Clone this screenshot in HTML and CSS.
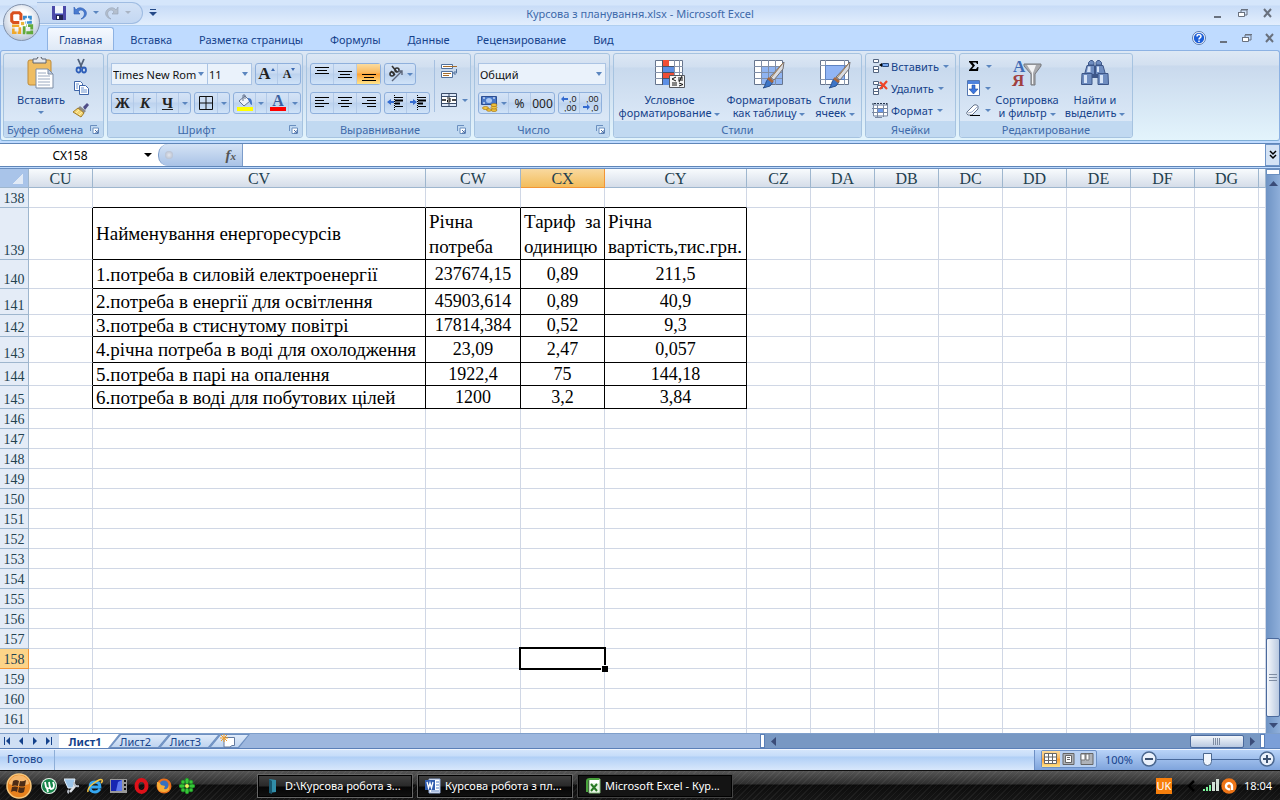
FILE: index.html
```html
<!DOCTYPE html>
<html lang="ru">
<head>
<meta charset="utf-8">
<title>Курсова з планування.xlsx - Microsoft Excel</title>
<link rel="stylesheet" href="styles.css">
</head>
<body>
<div class="app">
  <header class="titlebar">
    <div class="left">
      <div class="quick">
        <button class="flat" aria-label="Сохранить"><svg width="16" height="16" viewBox="0 0 16 16"><path d="M1 1h14v14H2l-1-1z" fill="#4a48a8"/><path d="M4 1h8v7H4z" fill="#eef3fb"/><path d="M4 8h8v1H4z" fill="#8c9ee0"/><path d="M5 10h7v5H5z" fill="#202552"/><path d="M6 11h2v3H6z" fill="#fff"/></svg></button>
        <button class="flat" aria-label="Отменить"><svg width="16" height="16" viewBox="0 0 16 16"><path d="M2 2v7h6L6 7c2-3 5-2 6 0s0 5-3 7c5-1 7-6 4-9S6 2 4 5z" fill="#4a7bd0" stroke="#2b5cb2" stroke-width=".6"/></svg></button>
        <i class="caret"></i>
        <button class="flat" aria-label="Вернуть"><svg width="16" height="16" viewBox="0 0 16 16"><path d="M14 2v7H8l2-2C8 4 5 5 4 7s0 5 3 7C2 13 0 8 3 5s7-3 9 0z" fill="#b4bfce" stroke="#95a2b5" stroke-width=".6"/></svg></button>
        <i class="caret grey"></i>
      </div>
      <button class="flat customize" aria-label="Настройка"><svg width="8" height="7" viewBox="0 0 8 7"><path d="M1 0h6v1H1zM0 3h8L4 7z" fill="#254a88"/></svg></button>
    </div>
    <h1 class="title">Курсова з планування.xlsx - Microsoft Excel</h1>
    <div class="winctl">
      <button class="flat" aria-label="Свернуть"><svg width="10" height="12" viewBox="0 0 10 12"><path d="M1 9h7v2H1z" fill="#69717e"/></svg></button>
      <button class="flat" aria-label="Развернуть"><svg width="10" height="12" viewBox="0 0 10 12"><path d="M3 5V3h6v5H7" fill="none" stroke="#69717e"/><path d="M.5 5.5h6v4h-6z" fill="#fff" stroke="#69717e"/><path d="M0 5h7v1H0zM3 2h7v1H3z" fill="#69717e"/></svg></button>
      <button class="flat" aria-label="Закрыть"><svg width="10" height="12" viewBox="0 0 10 12"><path d="M1 2l7 8M8 2l-7 8" stroke="#69717e" stroke-width="2"/></svg></button>
    </div>
  </header>
  <button class="office" aria-label="Office"><svg width="26" height="26" viewBox="0 0 24 24" fill="none"><path d="M11 9.500V4L9.500 2.500H4L2.500 4v6L4 11.500h5.500" stroke="#d9501e" stroke-width="2.800"/><path d="M14 9V6.500h6v5h-5" stroke="#3a8fd0" stroke-width="2.200" stroke-dasharray="5 1"/><path d="M9.500 14.500H4v6.500h6v-5" stroke="#f0a82a" stroke-width="2.400" stroke-dasharray="7 1"/><path d="M14 15v6h7v-6.500h-5" stroke="#62aa3b" stroke-width="2.600" stroke-dasharray="7 1"/><path d="M11 11h3v3h-3z" fill="#e9b53b"/></svg></button>

  <nav class="tabs">
    <button class="tab active">Главная</button><button class="tab">Вставка</button><button class="tab">Разметка страницы</button><button class="tab">Формулы</button><button class="tab">Данные</button><button class="tab">Рецензирование</button><button class="tab">Вид</button>
    <div class="winctl inner">
      <button class="flat" aria-label="Справка"><svg width="14" height="14" viewBox="0 0 14 14"><circle cx="7" cy="7" r="6.500" fill="#fff" stroke="#5879ae"/><circle cx="7" cy="7" r="5.200" fill="#1d5fd8"/><path d="M5 5.500C5 3 9 3 9 5.300 9 7 7 6.800 7 8.500M7 9.500V11" stroke="#fff" stroke-width="1.500" fill="none"/></svg></button>
      <button class="flat" aria-label="Свернуть книгу"><svg width="10" height="12" viewBox="0 0 10 12"><path d="M1 9h7v2H1z" fill="#69717e"/></svg></button>
      <button class="flat" aria-label="Развернуть книгу"><svg width="10" height="12" viewBox="0 0 10 12"><path d="M3 5V3h6v5H7" fill="none" stroke="#69717e"/><path d="M.5 5.500h6v4h-6z" fill="#fff" stroke="#69717e"/><path d="M0 5h7v1H0zM3 2h7v1H3z" fill="#69717e"/></svg></button>
      <button class="flat" aria-label="Закрыть книгу"><svg width="10" height="12" viewBox="0 0 10 12"><path d="M1 2l7 8M8 2l-7 8" stroke="#69717e" stroke-width="2"/></svg></button>
    </div>
  </nav>

  <section class="ribbon">
    <div class="group g-clip">
      <div class="body">
        <button class="big paste"><svg width="28" height="32" viewBox="0 0 28 32"><rect x="1" y="3" width="23" height="25" rx="2" fill="#efbd62" stroke="#bd8a38"/><path d="M6 2h4a2.500 2.500 0 0 1 5 0h4v4H6z" fill="#e4e7ec" stroke="#5e6570"/><path d="M9 12h12l5 5v14H9z" fill="#fff" stroke="#7d8da5"/><path d="M21 12v5h5z" fill="#c5d1e4" stroke="#7d8da5"/><path d="M11 16h8M11 19h12M11 22h12M11 25h12M11 28h12" stroke="#9aa9c0"/></svg><span>Вставить</span><i class="caret"></i></button>
        <div class="stack small">
          <button class="flat" aria-label="Вырезать"><svg width="16" height="16" viewBox="0 0 16 16" fill="none"><path d="M5 1l4 9M11 1L7 10" stroke="#52627b" stroke-width="1.800"/><ellipse cx="5.500" cy="12" rx="2" ry="2.500" stroke="#2c5db8" stroke-width="1.800"/><ellipse cx="11" cy="12" rx="2" ry="2.500" stroke="#2c5db8" stroke-width="1.800"/></svg></button>
          <button class="flat" aria-label="Копировать"><svg width="16" height="16" viewBox="0 0 16 16"><path d="M1.500 1.500h6l2 2v7h-8z" fill="#fff" stroke="#3e65a8"/><path d="M6.500 5.500h6l3 3v6h-9z" fill="#fff" stroke="#3e65a8"/><path d="M3 4h3M3 6h2M3 8h2M8 8h3M8 10h6M8 12h6" stroke="#6d94d0"/></svg></button>
          <button class="flat" aria-label="Формат по образцу"><svg width="16" height="16" viewBox="0 0 16 16"><path d="M10 5l4-4 2 2-4 5z" fill="#504e88"/><path d="M7 4l6 5-2 2-6-5z" fill="#8e8b86"/><path d="M5 6l6 5-3 4-8-5z" fill="#f2d475" stroke="#a17b26"/><path d="M3 11l3-3M6 13l3-3" stroke="#fff0a8"/></svg></button>
        </div>
      </div>
      <footer><span>Буфер обмена</span><button class="launch" aria-label="Буфер обмена: параметры"><svg width="9" height="9" viewBox="0 0 9 9"><path d="M.5 6V.5H7" fill="none" stroke="#6a8fbf"/><path d="M3 3h5.500v5.500H3z" fill="#fff" stroke="#6a8fbf"/><path d="M5 5l3 3V5M8 8H5" fill="none" stroke="#4a6fa5"/></svg></button></footer>
    </div>

    <div class="group g-font">
      <div class="body rows">
        <div class="row">
          <div class="join"><label class="combo c-font"><select aria-label="Шрифт"><option>Times New Rom</option></select></label><label class="combo c-size"><select aria-label="Размер"><option>11</option></select></label></div>
          <div class="btns"><button class="serif big-a w22">A<i class="mini up"></i></button><button class="serif sm w22">A<i class="mini"></i></button></div>
        </div>
        <div class="row">
          <div class="btns"><button class="serif w22">Ж</button><button class="serif it w24">К</button><button class="serif un w22">Ч</button><button class="drop" aria-label="Подчеркивание"><i class="caret"></i></button></div>
          <div class="btns"><button class="w24" aria-label="Границы"><svg width="14" height="14" viewBox="0 0 14 14"><path d="M.5.5h13v13H.5zM7 0v14M0 7h14" fill="none" stroke="#111" stroke-width="1"/></svg></button><button class="drop" aria-label="Виды границ"><i class="caret"></i></button></div>
          <div class="btns"><button class="w22" aria-label="Цвет заливки"><svg width="18" height="18" viewBox="0 0 18 18"><path d="M3 7l6-5 5 5-6 5z" fill="#eef2fa" stroke="#66758f"/><path d="M7 7V1h2v4" fill="none" stroke="#66758f"/><path d="M12 4c4 0 4 3 4 7-2 0-2-4-4-5z" fill="#4375c4"/><path d="M1 13h16v4H1z" fill="#ff0"/></svg></button><button class="drop" aria-label="Выбор заливки"><i class="caret"></i></button><button class="w22" aria-label="Цвет текста"><svg width="18" height="18" viewBox="0 0 18 18"><text x="9" y="12" text-anchor="middle" font-family="Liberation Serif" font-weight="bold" font-size="16" fill="#3b5f9f">A</text><path d="M1 13h16v4H1z" fill="red"/></svg></button><button class="drop" aria-label="Выбор цвета текста"><i class="caret"></i></button></div>
        </div>
      </div>
      <footer><span>Шрифт</span><button class="launch" aria-label="Шрифт: параметры"><svg width="9" height="9" viewBox="0 0 9 9"><path d="M.5 6V.5H7" fill="none" stroke="#6a8fbf"/><path d="M3 3h5.500v5.500H3z" fill="#fff" stroke="#6a8fbf"/><path d="M5 5l3 3V5M8 8H5" fill="none" stroke="#4a6fa5"/></svg></button></footer>
    </div>

    <div class="group g-align">
      <div class="body">
        <div class="rows">
          <div class="row">
            <div class="btns"><button class="w23" aria-label="По верхнему краю"><svg width="16" height="16" viewBox="0 0 16 16"><path d="M1 1.500h14M3 4.500h10M1 7.500h14" stroke="#000" stroke-width="1"/></svg></button><button class="w23" aria-label="По середине"><svg width="16" height="16" viewBox="0 0 16 16"><path d="M1 5.500h14M3 8.500h10M1 11.500h14" stroke="#000"/></svg></button><button class="w23 hot" aria-label="По нижнему краю"><svg width="16" height="16" viewBox="0 0 16 16"><path d="M1 8.500h14M3 11.500h10M1 14.500h14" stroke="#000"/></svg></button></div>
            <div class="btns"><button class="w30" aria-label="Ориентация"><svg width="17" height="18" viewBox="0 0 17 18"><g fill="none" stroke="#333" stroke-width="1.600"><circle cx="5" cy="9" r="2"/><path d="M4 6l4 4"/><circle cx="10" cy="5" r="2"/><path d="M5 1l5 6"/></g><path d="M5 16L15 6m-4 0h4v4" fill="none" stroke="#5a6478" stroke-width="1.400"/></svg><i class="caret"></i></button></div>
          </div>
          <div class="row">
            <div class="btns"><button class="w23" aria-label="По левому краю"><svg width="16" height="16" viewBox="0 0 16 16"><path d="M1 2.500h14M1 5.500h9M1 8.500h14M1 11.500h9" stroke="#000"/></svg></button><button class="w23" aria-label="По центру"><svg width="16" height="16" viewBox="0 0 16 16"><path d="M1 2.500h14M4 5.500h8M1 8.500h14M4 11.500h8" stroke="#000"/></svg></button><button class="w23" aria-label="По правому краю"><svg width="16" height="16" viewBox="0 0 16 16"><path d="M1 2.500h14M6 5.500h9M1 8.500h14M6 11.500h9" stroke="#000"/></svg></button></div>
            <div class="btns"><button class="w22" aria-label="Уменьшить отступ"><svg width="17" height="16" viewBox="0 0 17 16"><path d="M8 2.500h8M8 11.500h8" stroke="#000"/><path d="M8 5.500h8M8 8.500h5" stroke="#000" stroke-width="2"/><path d="M7.500 0v16" stroke="#000" stroke-dasharray="1 1"/><path d="M0 7l4-3v2h3v2H4v2z" fill="#346bd0"/></svg></button><button class="w22" aria-label="Увеличить отступ"><svg width="17" height="16" viewBox="0 0 17 16"><path d="M8 2.500h8M8 11.500h8" stroke="#000"/><path d="M8 5.500h8M8 8.500h5" stroke="#000" stroke-width="2"/><path d="M7.500 0v16" stroke="#000" stroke-dasharray="1 1"/><path d="M7 7L3 4v2H0v2h3v2z" fill="#346bd0"/></svg></button></div>
          </div>
        </div>
        <div class="rows wrapcol">
          <button class="flat" aria-label="Перенос текста"><svg width="17" height="16" viewBox="0 0 17 16"><path d="M.5 1.500h11v4H.5zM.5 8.500h11v6H.5z" fill="#fff" stroke="#51719d"/><path d="M2 3.500h14" stroke="#a36b2b"/><path d="M2 10.500h8M2 12.500h6" stroke="#a36b2b"/><path d="M15.500 6v4h-3m2-2l-2 2 2 2" fill="none" stroke="#51719d"/></svg></button>
          <button class="flat pair" aria-label="Объединить"><svg width="17" height="16" viewBox="0 0 17 16"><path d="M.5 1.500h15v13H.5zM8 1.500v13M0 4.500h16M0 11.500h16" fill="#dce7f7" stroke="#394b68"/><path d="M1 5h14v6H1z" fill="#fff"/><path d="M1 8h4M11 8h4" stroke="#111" stroke-width="1.500"/><path d="M6 6h3v4H6.500V8H9" fill="none" stroke="#111"/></svg><i class="caret"></i></button>
        </div>
      </div>
      <footer><span>Выравнивание</span><button class="launch" aria-label="Выравнивание: параметры"><svg width="9" height="9" viewBox="0 0 9 9"><path d="M.5 6V.5H7" fill="none" stroke="#6a8fbf"/><path d="M3 3h5.500v5.500H3z" fill="#fff" stroke="#6a8fbf"/><path d="M5 5l3 3V5M8 8H5" fill="none" stroke="#4a6fa5"/></svg></button></footer>
    </div>

    <div class="group g-num">
      <div class="body rows">
        <div class="row"><label class="combo c-fmt"><select aria-label="Числовой формат"><option>Общий</option></select></label></div>
        <div class="row">
          <div class="btns"><button class="w20" aria-label="Финансовый формат"><svg width="17" height="17" viewBox="0 0 17 17"><path d="M.5 1.500h15v8H.5z" fill="#4777c7" stroke="#2c4e93"/><ellipse cx="8" cy="5.500" rx="3" ry="2.500" fill="#a8c6f2"/><path d="M2 3h2M12 3h2M2 8h2" stroke="#fff"/><g fill="#f4c63b" stroke="#a4741a" stroke-width=".7"><ellipse cx="13" cy="15" rx="3" ry="1.500"/><ellipse cx="13" cy="12.500" rx="3" ry="1.500"/><ellipse cx="13" cy="10" rx="3" ry="1.500"/><ellipse cx="4.500" cy="13" rx="3" ry="1.500"/><ellipse cx="8" cy="15" rx="2.500" ry="1.300"/></g></svg></button><button class="drop w13" aria-label="Валюта"><i class="caret"></i></button><button class="w22 num">%</button><button class="w23 num">000</button></div>
          <div class="btns"><button class="w21" aria-label="Увеличить разрядность"><svg width="18" height="18" viewBox="0 0 18 18"><text x="9" y="8" font-family="Liberation Sans" font-size="9" fill="#222">,0</text><text x="4" y="17" font-family="Liberation Sans" font-size="9" fill="#222">,00</text><path d="M1 5l3-3v2h4v2H4v2z" fill="#346bd0"/></svg></button><button class="w21" aria-label="Уменьшить разрядность"><svg width="18" height="18" viewBox="0 0 18 18"><text x="4" y="8" font-family="Liberation Sans" font-size="9" fill="#222">,00</text><text x="9" y="17" font-family="Liberation Sans" font-size="9" fill="#222">,0</text><path d="M8 13l-3-3v2H1v2h4v2z" fill="#346bd0"/></svg></button></div>
        </div>
      </div>
      <footer><span>Число</span><button class="launch" aria-label="Число: параметры"><svg width="9" height="9" viewBox="0 0 9 9"><path d="M.5 6V.5H7" fill="none" stroke="#6a8fbf"/><path d="M3 3h5.500v5.500H3z" fill="#fff" stroke="#6a8fbf"/><path d="M5 5l3 3V5M8 8H5" fill="none" stroke="#4a6fa5"/></svg></button></footer>
    </div>

    <div class="group g-style">
      <div class="body">
        <button class="big b1"><svg width="32" height="32" viewBox="0 0 32 32"><path d="M1.500 3.500h27v24h-27z" fill="#fff" stroke="#66758e"/><path d="M1 9.500h28M1 15.500h28M1 21.500h28M8.500 3v25M20.500 3v25M25.500 3v25" stroke="#8693aa"/><path d="M8 3h7v6H8zM8 15h12v6H8z" fill="#f04e35"/><path d="M8 9h12v6H8zM8 21h7v7H8z" fill="#5c8fe5"/><path d="M8.500 3v25M8 9.500h12M8 15.500h12M8 21.500h8" stroke="#46536b"/><path d="M15.500 18.500h15v12h-15z" fill="#f6f6f6" stroke="#55585e"/><path d="M22 20l-4 2 4 2M18 26h5M18 28h5M24 21h5M24 23h5M28 19l-3 6M25 26l4 1.500-4 1.500" fill="none" stroke="#111"/></svg><span>Условное<br>форматирование <i class="caret"></i></span></button>
        <button class="big b2"><svg width="32" height="32" viewBox="0 0 32 32"><path d="M1.500 3.500h28v24h-28z" fill="#fff" stroke="#66758e"/><path d="M8 9h21v18H8z" fill="#8fb4f2"/><path d="M1 9.500h28M1 15.500h28M1 21.500h28M8.500 3v25M15.500 3v25M22.500 3v25" stroke="#7f8ea8"/><path d="M31 5l-1 7-9 11-4-3z" fill="#d9dce2" stroke="#747070"/><path d="M30 6L18 21" stroke="#9e7b54"/><path d="M16 21l4 4-3 4-7 2c3-2 2-7 6-10z" fill="#3d75c7" stroke="#29508d"/><path d="M16 20l5 4-2 2-5-4z" fill="#a9683c"/></svg><span>Форматировать<br>как таблицу <i class="caret"></i></span></button>
        <button class="big b3"><svg width="32" height="32" viewBox="0 0 32 32"><path d="M1.500 3.500h28v24h-28z" fill="#fff" stroke="#66758e"/><path d="M1 8.500h28M1 22.500h28M6.500 3v25M25.500 3v25" stroke="#8a98ae"/><path d="M6.500 8.500h19v14h-19z" fill="#91b5f5" stroke="#5e83c1"/><path d="M31 5l-1 7-9 11-4-3z" fill="#d9dce2" stroke="#747070"/><path d="M30 6L18 21" stroke="#9e7b54"/><path d="M16 21l4 4-3 4-7 2c3-2 2-7 6-10z" fill="#3d75c7" stroke="#29508d"/><path d="M16 20l5 4-2 2-5-4z" fill="#a9683c"/></svg><span>Стили<br>ячеек <i class="caret"></i></span></button>
      </div>
      <footer><span>Стили</span></footer>
    </div>

    <div class="group g-cells">
      <div class="body stack cells">
        <button class="flat line"><svg width="17" height="16" viewBox="0 0 17 16"><path d="M1.500 1.500h5v3h-5zM1.500 8.500h5v3h-5zM1.500 11.500h5v3h-5z" fill="#fff" stroke="#53647f"/><path d="M10.500 5.500h6v3h-6z" fill="#78a7ed" stroke="#26487b"/><path d="M7 7l3-2v4z"/></svg><span>Вставить</span><i class="caret"></i></button>
        <button class="flat line"><svg width="17" height="16" viewBox="0 0 17 16"><path d="M1.500 1.500h5v3h-5zM1.500 8.500h5v3h-5zM1.500 11.500h5v3h-5zM5.500 5.500h5v3h-5z" fill="#fff" stroke="#53647f"/><path d="M8 2l7 7M15 1L8 9" stroke="#f04427" stroke-width="2.200"/></svg><span>Удалить</span><i class="caret"></i></button>
        <button class="flat line"><svg width="17" height="16" viewBox="0 0 17 16"><path d="M1.500 3.500h14v10h-14z" fill="#fff"/><path d="M6 7h5v4H6z" fill="#6b9aee"/><path d="M0 6.500h16M0 10.500h16M5.500 3v13M11.500 3v12M1.500 3v11h14V3zM3 15.500h7" fill="none" stroke="#7a89a2"/><path d="M1 1v3M15 1v3M2 1.500h13" stroke="#25344b" stroke-dasharray="2 1"/></svg><span>Формат</span><i class="caret"></i></button>
      </div>
      <footer><span>Ячейки</span></footer>
    </div>

    <div class="group g-edit">
      <div class="body">
        <div class="stack cells">
          <button class="flat line" aria-label="Сумма"><svg width="16" height="16" viewBox="0 0 16 16"><path d="M3 3h9v3h-1L10 4.500H6.500L9 7.500 6 11h4l1.500-2h1L12 13H3v-1l3.500-4L3 4z" fill="#000"/></svg><i class="caret"></i></button>
          <button class="flat line" aria-label="Заполнить"><svg width="15" height="16" viewBox="0 0 15 16"><path d="M1.500.5h12v15h-12z" fill="#fff" stroke="#5577b0"/><path d="M2 1h11v3H2z" fill="#4f83dd"/><path d="M6 5h3v4h3l-4.500 5L3 9h3z" fill="#3b76df" stroke="#214c9a" stroke-width=".6"/></svg><i class="caret"></i></button>
          <button class="flat line" aria-label="Очистить"><svg width="15" height="16" viewBox="0 0 15 16"><path d="M1 10l7-7q2-1 4 1v3l-6 6H2q-2-1-1-3z" fill="#fff" stroke="#65748c"/><path d="M2 11l4-1 6-6" fill="none" stroke="#9aabcb"/><path d="M4 13.500h10" stroke="#000"/></svg><i class="caret"></i></button>
        </div>
        <button class="big b4"><svg width="32" height="32" viewBox="0 0 32 32"><text x="2" y="15" font-family="Liberation Serif" font-weight="bold" font-size="17" fill="#3f6bb5">А</text><text x="1" y="29" font-family="Liberation Serif" font-weight="bold" font-size="17" fill="#a04040">Я</text><path d="M13 7h17v2l-6 8v11h-4V17l-7-8z" fill="#a9aaae" stroke="#77787d"/><path d="M16 8h9l-3 8v11h-1V16z" fill="#f1f2f4"/></svg><span>Сортировка<br>и фильтр <i class="caret"></i></span></button>
        <button class="big b5"><svg width="32" height="32" viewBox="0 0 32 32"><g fill="#6f8dc0" stroke="#3d5688"><path d="M9.500 5.500l2-2h2l1.500 2V8H9.500zM17 5.500l1.500-2h2l2 2V8H17z"/><path d="M8 8.500h7.500v9H5.500zM16.500 8.500H24l2.500 9h-10z"/><path d="M3 16.500h10v11H2.500zM19 16.500h10l.5 11H19z"/></g><path d="M5 18h3v8H5zM21 18h3v8h-3zM9 9.500h2.500V15H8zM18 9.500h2V15h-2z" fill="#d5e3f8"/><path d="M13 17h6v4h-6z" fill="#3d5688"/></svg><span>Найти и<br>выделить <i class="caret"></i></span></button>
      </div>
      <footer><span>Редактирование</span></footer>
    </div>
  </section>

  <section class="formula">
    <div class="namebox"><input aria-label="Имя" value="CX158"><i class="caret black"></i></div>
    <button class="fx" aria-label="Вставить функцию"><i class="dot"></i><span>f<sub>x</sub></span></button>
    <input class="finput" aria-label="Строка формул">
    <button class="expand" aria-label="Развернуть строку"><svg width="8" height="10" viewBox="0 0 8 10"><path d="M1 1l3 3 3-3M1 5l3 3 3-3" fill="none" stroke="#000" stroke-width="1.500"/></svg></button>
  </section>

  <main class="sheetarea">
    <div class="sheet"><table id="grid"></table></div>
    <div class="vscroll">
      <i class="split"></i>
      <button class="arr" aria-label="Вверх"><svg width="9" height="5" viewBox="0 0 9 5"><path d="M0 5h9L4.500 0z" fill="#3a4c78"/></svg></button>
      <div class="vtrack"><i class="thumb"></i></div>
      <button class="arr" aria-label="Вниз"><svg width="9" height="5" viewBox="0 0 9 5"><path d="M0 0h9L4.500 5z" fill="#3a4c78"/></svg></button>
    </div>
  </main>

  <div class="bottom">
    <div class="navs">
      <button class="flat" aria-label="Первый лист"><svg width="7" height="8" viewBox="0 0 7 8"><path d="M0 0h1v8H0zM6 0v8L2 4z" fill="#15428b"/></svg></button>
      <button class="flat" aria-label="Предыдущий"><svg width="7" height="8" viewBox="0 0 7 8"><path d="M5 0v8L1 4z" fill="#15428b"/></svg></button>
      <button class="flat" aria-label="Следующий"><svg width="7" height="8" viewBox="0 0 7 8"><path d="M1 0v8l4-4z" fill="#15428b"/></svg></button>
      <button class="flat" aria-label="Последний"><svg width="7" height="8" viewBox="0 0 7 8"><path d="M0 0v8l4-4zM5 0h1v8H5z" fill="#15428b"/></svg></button>
    </div>
    <button class="stab on"><span>Лист1</span></button><button class="stab"><span>Лист2</span></button><button class="stab"><span>Лист3</span></button><button class="stab new" aria-label="Вставить лист"><svg width="16" height="14" viewBox="0 0 16 14"><path d="M4 3.500h10.500v8H12l-2 1.500H4z" fill="#fff" stroke="#62799f"/><path d="M4 0v8M0 4h8M1 1l6 6M7 1L1 7" stroke="#f29d26"/></svg></button>
    <div class="gap"></div>
    <i class="hsplit"></i>
    <div class="hscroll">
      <button class="flat" aria-label="Влево"><svg width="5" height="9" viewBox="0 0 5 9"><path d="M5 0v9L0 4.500z" fill="#3a4c78"/></svg></button>
      <i class="hthumb"></i>
      <button class="flat" aria-label="Вправо"><svg width="5" height="9" viewBox="0 0 5 9"><path d="M0 0v9l5-4.500z" fill="#3a4c78"/></svg></button>
    </div>
    <i class="hsplit"></i><i class="corner"></i>
  </div>

  <footer class="status">
    <span class="ready">Готово</span>
    <div class="zoombar">
      <div class="views">
        <button class="hot" aria-label="Обычный"><svg width="14" height="12" viewBox="0 0 14 12"><path d="M.5.5h12v10H.5zM0 4h13M0 7.500h13M4.500 0v11M8.500 0v11" fill="#fff" stroke="#666"/></svg></button>
        <button aria-label="Разметка страницы"><svg width="14" height="12" viewBox="0 0 14 12"><path d="M1 .5h11v11H1z" fill="#aeb2b8" stroke="#666"/><path d="M3.500 2.500h6v7h-6z" fill="#fff" stroke="#666"/><path d="M5 4.500h3M5 6.500h3" stroke="#666"/></svg></button>
        <button aria-label="Страничный"><svg width="14" height="12" viewBox="0 0 14 12"><path d="M1 .5h12v11H1z" fill="#aeb2b8" stroke="#666"/><path d="M1 1h4v6H1zM6 1h3v6H6z" fill="#fff" stroke="#777"/></svg></button>
      </div>
      <span class="pct">100%</span>
      <button class="flat" aria-label="Уменьшить"><svg width="16" height="16" viewBox="0 0 16 16"><circle cx="8" cy="8" r="7" fill="#eaf1fb" stroke="#4a678f" stroke-width="1.500"/><path d="M4 8h8" stroke="#3c5170" stroke-width="2"/></svg></button>
      <input class="zoom" type="range" min="0" max="100" value="49" aria-label="Масштаб">
      <button class="flat" aria-label="Увеличить"><svg width="16" height="16" viewBox="0 0 16 16"><circle cx="8" cy="8" r="7" fill="#eaf1fb" stroke="#4a678f" stroke-width="1.500"/><path d="M4 8h8M8 4v8" stroke="#3c5170" stroke-width="2"/></svg></button>
    </div>
  </footer>

  <footer class="taskbar">
    <div class="launchers">
      <button class="flat start" aria-label="Пуск"><svg width="26" height="26" viewBox="0 0 26 26"><circle cx="13" cy="13" r="12" fill="#e8821e" stroke="#f8c77c" stroke-width="1.500"/><path d="M3 11a10 9 0 0 1 20 0q-10 4-20 0z" fill="#f6b66a"/><path d="M7 8q3-2 6 0l-1 5q-3-1-6 0zM14 8q3 1 6-1l-1 6q-3 1-6 0zM6 14q3-1 6 0l-1 5q-3-2-6 0zM13 14q3 1 6 0l-1 5q-3 2-6 0z" fill="#4b2b16"/></svg></button>
      <button class="flat" aria-label="uTorrent"><svg width="16" height="16" viewBox="0 0 16 16"><circle cx="8" cy="8" r="8" fill="#e6f4ec"/><circle cx="8" cy="8" r="7" fill="#18864b"/><path d="M4 4l1 5q1 2 4 1l-1-6M9 9l1 2q3 0 3-4l-1-3M6 10l1 4" fill="none" stroke="#fff" stroke-width="1.800"/></svg></button>
      <button class="flat" aria-label="Настройка"><svg width="16" height="16" viewBox="0 0 16 16"><path d="M0 1h11l-2 9H4z" fill="#9cc4e8" stroke="#e4f0fa"/><path d="M6 14l6-7" stroke="#dfe3e8" stroke-width="2.500"/><path d="M10 4q0 5 5 4M5 12q-2 2 0 3" stroke="#b7bdc6" stroke-width="2" fill="none"/></svg></button>
      <button class="flat" aria-label="Internet Explorer"><svg width="16" height="16" viewBox="0 0 16 16"><path d="M13 11q-2 3-5 3-5 0-5-5t5-5q5 0 5 5H4" fill="none" stroke="#35a7f1" stroke-width="2.800"/><path d="M1 14Q0 10 7 5t8-3q1 1-1 3" fill="none" stroke="#f3c542" stroke-width="1.500"/></svg></button>
      <button class="flat" aria-label="Видео"><svg width="17" height="14" viewBox="0 0 17 14"><path d="M0 0h17v14H0z" fill="#999"/><path d="M1 1h11v11H1z" fill="#1726b2"/><path d="M6 12l2-9 4-2v11z" fill="#5d78ee"/><path d="M14 1h2v2h-2zM14 5h2v2h-2zM14 9h2v2h-2z" fill="#111"/></svg></button>
      <button class="flat" aria-label="Opera"><svg width="15" height="16" viewBox="0 0 15 16"><ellipse cx="7.500" cy="8" rx="5" ry="6" fill="none" stroke="#dd1119" stroke-width="4"/></svg></button>
      <button class="flat" aria-label="Firefox"><svg width="16" height="16" viewBox="0 0 16 16"><circle cx="8" cy="8" r="7.500" fill="#e86e1b"/><circle cx="8" cy="7" r="4.500" fill="#3770c0"/><path d="M1 4q3 0 4 3l4 1-1 3q5 1 5-5 2 7-4 8Q0 15 1 4z" fill="#f8ad37"/></svg></button>
      <button class="flat" aria-label="ICQ"><svg width="16" height="16" viewBox="0 0 16 16"><g fill="#37c637" stroke="#147a20" stroke-width=".6"><ellipse cx="8" cy="3" rx="2" ry="3"/><ellipse cx="8" cy="13" rx="2" ry="3"/><ellipse cx="3" cy="8" rx="3" ry="2"/><ellipse cx="13" cy="8" rx="3" ry="2"/><circle cx="4" cy="4" r="2"/><circle cx="12" cy="4" r="2"/><circle cx="4" cy="12" r="2"/><circle cx="12" cy="12" r="2"/></g><circle cx="8" cy="8" r="2" fill="#e9f45d"/></svg></button>
    </div>
    <div class="tasks">
      <button class="task"><svg width="16" height="16" viewBox="0 0 16 16"><path d="M4 1l7 1v12l-7 1z" fill="#318da8"/><path d="M4 1l3 2v13l-3-1z" fill="#18566d"/></svg><span>D:\Курсова робота з...</span></button>
      <button class="task"><svg width="16" height="16" viewBox="0 0 16 16"><path d="M4 1h11v14H4z" fill="#fff" stroke="#8fa9d7"/><path d="M11 4h3M11 7h3M11 10h3M6 13h8" stroke="#537dc3"/><path d="M0 2h10v10H0z" fill="#315cae"/><path d="M2 4l1.500 6L5 5l1.500 5L8 4" fill="none" stroke="#fff" stroke-width="1.300"/></svg><span>Курсова робота з пл...</span></button>
      <button class="task now"><svg width="16" height="16" viewBox="0 0 16 16"><path d="M4 1h11v14H4z" fill="#fff" stroke="#79b46f"/><path d="M2 14V3q0-2 3-2h9" fill="none" stroke="#48a23b" stroke-width="2"/><path d="M5 5h9v9H5z" fill="#e8f5e4"/><path d="M6 6l6 7M12 6l-6 7" stroke="#287924" stroke-width="2"/></svg><span>Microsoft Excel - Кур...</span></button>
    </div>
    <div class="tray">
      <span class="lang">UK</span>
      <svg class="back" width="8" height="12" viewBox="0 0 8 12"><path d="M7 1L2 6l5 5" fill="none" stroke="#000" stroke-width="2.500"/></svg>
      <svg width="16" height="13" viewBox="0 0 16 13"><path d="M0 10h2v2H0zM3 8h2v4H3zM6 6h2v6H6z" fill="#7cf29a"/><path d="M9 3h3v9H9zM13 0h3v12h-3z" fill="#d4ded6"/></svg>
      <svg width="16" height="16" viewBox="0 0 16 16"><circle cx="8" cy="8" r="7.700" fill="#ef7517"/><path d="M11 12V8a3 3 0 1 0-2 3" fill="none" stroke="#fff" stroke-width="2.400"/></svg>
      <time>18:04</time>
    </div>
  </footer>
</div>
<script src="grid.js"></script>
</body>
</html>
```
FILE: styles.css
```css
* { box-sizing: border-box; }
body { margin: 0; font: 11px/13px "Noto Sans", "DejaVu Sans", sans-serif; color: #15428b; }
button, input, select { font: inherit; color: inherit; margin: 0; padding: 0; border: 0; background: none; }
button { display: flex; align-items: center; justify-content: center; }
svg { display: block; flex: none; }
.app { position: relative; display: flex; flex-direction: column; height: 100vh; overflow: hidden; background: #bfdbff; }

.titlebar { flex: none; height: 26px; display: grid; grid-template-columns: 1fr auto 1fr; align-items: center; border-bottom: 1px solid #b0cff0; background: linear-gradient(#d5e6fb 0, #d5e6fb 5px, #c8dcf7 6px, #e2eefd 25px); }
.left { display: flex; align-items: center; }
.quick { display: flex; align-items: center; gap: 5px; height: 22px; width: 106px; margin-left: 37px; padding-left: 14px; border: 1px solid #9fbce2; border-left: 0; border-radius: 0 11px 11px 0; background: linear-gradient(#d3e2f6, #c3d7f2); }
.customize { margin-left: 2px; padding: 4px; }
.title { margin: 0; padding-top: 2px; font: inherit; color: #3e6aaa; }
.winctl { display: flex; gap: 15px; align-items: center; justify-content: flex-end; padding-right: 7px; }
.winctl.inner { margin-left: auto; gap: 13px; padding: 0 5px 5px 0; }
.caret { display: inline-block; flex: none; border: 3px solid transparent; border-top: 3px solid #5b86bf; border-bottom: 0; vertical-align: middle; }
.caret.grey { border-top-color: #a9b4c4; }
.caret.black { border-width: 4px 4px 0; border-top-color: #000; }
.office { position: absolute; left: 3px; top: 4px; width: 37px; height: 37px; border-radius: 50%; border: 1px solid #8292ab; background: radial-gradient(circle at 50% 40%, #fff 30%, #d4dce8 60%, #9eadc4 100%); }

.tabs { flex: none; height: 24px; display: flex; align-items: flex-end; padding-left: 47px; background: #bfdbff; }
.tab { height: 23px; padding: 0 12px 0 13px; border: 1px solid transparent; border-bottom: 0; }
.tab.active { padding: 0 11px; margin-right: 2px; border-color: #8db2e3; border-radius: 3px 3px 0 0; background: linear-gradient(#f5f9ff, #dfe9f6); }

.ribbon { flex: none; height: 91px; display: flex; gap: 3px; padding: 2px 3px; border: 1px solid #8db2e3; border-bottom-color: #7faed6; border-radius: 3px; background: linear-gradient(#dde8f5 0, #d3e0f0 14px, #c9d9ed 15px, #e3f4fc 100%); }
.group { flex: none; display: flex; flex-direction: column; height: 85px; border: 1px solid #a6c3e0; border-radius: 3px; background: linear-gradient(#dce7f4 0, #d1dff0 13px, #c8d9ed 14px, #dbe8f7 68px); }
.group footer { flex: none; display: flex; align-items: center; height: 16px; background: #c1d9f1; color: #3e6aaa; border-radius: 0 0 3px 3px; }
.group footer span { flex: 1; text-align: center; white-space: nowrap; }
.launch { width: 17px; }
.body { flex: 1; display: flex; min-height: 0; }
.g-clip { width: 101px; margin-left: -1px; } .g-font { width: 196px; } .g-align { width: 165px; } .g-num { width: 136px; } .g-style { width: 249px; } .g-cells { width: 91px; } .g-edit { width: 174px; }
.stack { display: flex; flex-direction: column; }
.small { padding-top: 4px; gap: 6px; }
.rows { display: flex; flex-direction: column; gap: 7px; padding: 9px 0 0 3px; }
.row { display: flex; gap: 3px; }
.join, .btns { display: flex; height: 22px; }
.btns { border: 1px solid #8fb0dc; border-radius: 3px; background: linear-gradient(#d4e3f6 0, #c9dbf2 45%, #bcd2ee 50%, #d0e3f8 100%); }
.btns button { flex: none; border-right: 1px solid #b3cae8; height: 20px; }
.btns button:last-child { border-right: 0; }
.btns .w20 { border-right: 0; }
.w13 { width: 13px; } .w20 { width: 20px; } .w21 { width: 21px; } .w22 { width: 22px; } .w23 { width: 23px; } .w24 { width: 23px; } .w30 { width: 30px; gap: 3px; }
.btns .drop { width: 10px; }
.g-font .drop { width: 11px; }
.hot { background: linear-gradient(#fbdb9d 0, #fbb85c 45%, #fd9f32 50%, #ffe58c 100%); }
.serif { font: bold 15px/18px "Liberation Serif", serif; color: #222; }
.it { font-style: italic; }
.un { text-decoration: underline; }
.big-a { font-size: 17px; }
.sm { font-size: 12px; }
.mini { align-self: flex-start; margin-top: 4px; border: 2px solid transparent; border-top: 3px solid #3d6ab0; border-bottom: 0; }
.mini.up { border-top: 0; border-bottom: 3px solid #3d6ab0; }
.num { font-size: 12px; color: #222; font-family: "Liberation Sans Narrow", "Noto Sans", sans-serif; }
.combo { position: relative; display: block; height: 22px; border: 1px solid #abc4e4; background: #eaf2fb; color: #111; }
.combo::after { content: ""; position: absolute; right: 3px; top: 8px; border: 3px solid transparent; border-top: 4px solid #5b86bf; border-bottom: 0; }
.combo select { appearance: none; width: 100%; height: 20px; padding-left: 1px; outline: 0; color: #111; }
.c-font { width: 97px; } .c-size { width: 44px; border-left: 0; } .c-fmt { width: 128px; }
.wrapcol { margin: 6px 0 9px 4px; padding: 3px 0 0 6px; border-left: 1px solid #a6c0e0; gap: 13px; align-items: flex-start; }
.pair { gap: 4px; }
.big { flex-direction: column; justify-content: flex-start; padding-top: 3px; gap: 4px; white-space: nowrap; text-align: center; }
.paste { width: 60px; margin: 0 2px 0 7px; }
.big .caret { margin-top: 1px; }
.b1 { width: 111px; } .b2 { width: 88px; } .b3 { width: 44px; } .b4 { width: 70px; } .b5 { width: 66px; }
.cells { padding: 3px 0 0 6px; gap: 4px; }
.line { gap: 2px; height: 18px; justify-content: flex-start; }
.line .caret { margin-left: 2px; }

.formula { flex: none; display: flex; height: 24px; margin-top: 2px; border: solid #5f86b8; border-width: 1px 0; background: #fff; color: #000; }
.namebox { display: flex; align-items: center; width: 158px; padding-right: 6px; }
.namebox input { flex: 1; min-width: 0; padding-right: 4px; text-align: center; font-size: 12px; }
.fx { width: 85px; justify-content: space-between; padding: 0 6px; border: 1px solid #7b9cca; border-width: 0 1px; border-radius: 10px 0 0 10px; background: linear-gradient(#d5e3f5, #a9c2e6); }
.fx span { font: italic bold 15px/18px "Liberation Serif", serif; color: #555; }
.fx sub { font-size: 11px; vertical-align: baseline; }
.dot { width: 8px; height: 8px; border-radius: 50%; background: radial-gradient(#e4e6ec, #a9b4c8); }
.finput { flex: 1; min-width: 0; }
.expand { width: 15px; border: 1px solid #6f95c8; background: #d4e3f5; }

.sheetarea { flex: 1; min-height: 0; display: flex; border-top: 1px solid #6a8fc0; margin-top: 1px; }
.sheet { flex: 1; min-width: 0; overflow: hidden; background: #fff; }
#grid { table-layout: fixed; width: 100%; border-collapse: separate; border-spacing: 0; font: 19px/19px "Liberation Serif", serif; color: #000; }
#grid td, #grid th { padding: 0; border: solid #d0d7e5; border-width: 0 1px 1px 0; font-weight: normal; }
#grid thead th { height: 19px; font-size: 16px; line-height: 17px; color: #23414f; border-color: #9eb6ce; background: linear-gradient(#f8fbfd, #d5dde9); }
#grid tbody th { font-size: 14px; line-height: 17px; color: #23414f; vertical-align: bottom; border-color: #9eb6ce; background: #e4ecf7; }
#grid .all { background: linear-gradient(135deg, transparent 50%, #e1eaf6 50%) 70% 60% / 10px 10px no-repeat, #a9c4e9; }
#grid thead .sel, #grid tbody .sel { background: linear-gradient(#f9d99f, #f3bd5c); border-color: #f29536; }
#grid tbody .sel { background: #fdd488; }
#grid .r { border-right-color: #000; }
#grid .b { border-bottom-color: #000; }
#grid .t { padding-left: 3px; white-space: nowrap; }
#grid .m { text-align: center; font-size: 18px; }
#grid .h { line-height: 25px; }
#grid .j { padding-right: 3px; text-align: justify; white-space: normal; }
#grid .cur { position: relative; }
.cur::before { content: ""; position: absolute; inset: -2px; border: 2px solid #000; }
.cur::after { content: ""; position: absolute; right: -4px; bottom: -4px; width: 6px; height: 6px; background: #000; border: solid #fff; border-width: 1px 0 0 1px; }

.vscroll { flex: none; width: 14px; display: flex; flex-direction: column; background: linear-gradient(90deg, #6e93c4, #8fafda); }
.split { height: 6px; border: 1px solid #6a8fc0; background: #fff; }
.arr { height: 16px; }
.vtrack { flex: 1; display: flex; flex-direction: column; justify-content: flex-end; }
.thumb { height: 79px; border: 1px solid #4b6a9d; border-radius: 2px; background: linear-gradient(#7f8da3, #7f8da3) 50% 35px / 8px 1px no-repeat, linear-gradient(#7f8da3, #7f8da3) 50% 38px / 8px 1px no-repeat, linear-gradient(#7f8da3, #7f8da3) 50% 41px / 8px 1px no-repeat, linear-gradient(90deg, #f4f7fb, #b9c9e1); }

.bottom { flex: none; display: flex; height: 16px; border-top: 1px solid #7f9fca; border-bottom: 1px solid #5b80b8; background: #9db7de; }
.navs { display: flex; align-items: center; justify-content: space-around; width: 59px; padding-right: 2px; background: #cfdff4; }
.stab { position: relative; width: 50px; height: 14px; padding-left: 3px; z-index: 1; }
.stab::before, .stab::after { content: ""; position: absolute; inset: 0 -11px 0 0; z-index: -1; background: #6d8fc0; clip-path: polygon(11px 0, 100% 0, calc(100% - 11px) 100%, 0 100%); }
.stab::after { background: linear-gradient(#e2edfb, #bcd2ef); clip-path: polygon(12px 1px, calc(100% - 2px) 1px, calc(100% - 12px) calc(100% - 1px), 2px calc(100% - 1px)); }
.stab.on { z-index: 2; padding-left: 2px; font-weight: bold; }
.stab.on::before { clip-path: polygon(0 0, 100% 0, calc(100% - 11px) 100%, 0 100%); }
.stab.on::after { background: #fff; clip-path: polygon(0 0, calc(100% - 1px) 0, calc(100% - 12px) 100%, 0 100%); }
.stab.new { width: 30px; padding-left: 8px; }
.gap { flex: 1; }
.hsplit { width: 5px; border: 1px solid #5b80b8; background: #fff; }
.hscroll { flex: 0 1 495px; display: flex; align-items: center; gap: 6px; padding: 0 5px 0 6px; background: #7898c3; }
.hthumb { width: 54px; height: 13px; margin-left: auto; border: 1px solid #4b6a9d; border-radius: 2px; background: repeating-linear-gradient(90deg, #7f8da3 0, #7f8da3 1px, transparent 1px, transparent 2px) 50% 50% / 8px 7px no-repeat, linear-gradient(#f4f7fb, #b9c9e1); }
.corner { width: 15px; background: #7b9fd8; }

.status { flex: none; display: flex; justify-content: space-between; height: 21px; border-top: 1px solid #eef5ff; background: linear-gradient(#d5e5fb 0, #c6dcf9 6px, #b0cff6 7px, #d8e7fb 100%); }
.ready { display: flex; align-items: center; width: 55px; padding: 0 0 3px 7px; border-right: 1px solid #8daed8; }
.zoombar { display: flex; align-items: center; padding: 0 5px 2px 6px; border-left: 1px solid #6d8fc5; background: linear-gradient(#b8d3f8, #7fa4dc); }
.views { display: flex; height: 18px; border: 1px solid #6c90c6; border-radius: 2px; background: #b9d1f2; }
.views button { width: 18px; }
.pct { width: 44px; text-align: center; }
.zoom { appearance: none; width: 102px; height: 16px; background: linear-gradient(#48699c, #48699c) 50% 50% / 100% 1px no-repeat; }
.zoom::-webkit-slider-thumb { appearance: none; width: 9px; height: 13px; background: #f1f6fd; border: 1px solid #4a678f; border-radius: 0 0 5px 5px; }

.taskbar { flex: none; display: flex; align-items: center; height: 30px; border-top: 1px solid #111; background: repeating-linear-gradient(135deg, rgba(255, 255, 255, .05) 0, rgba(255, 255, 255, .05) 1px, transparent 1px, transparent 4px), linear-gradient(#555 0, #2e2e2e 13px, #0c0c0c 14px, #161616 100%); color: #fff; }
.launchers { display: flex; align-items: center; gap: 7px; width: 257px; padding-left: 6px; }
.start { margin-right: 2px; }
.tasks { display: flex; gap: 4px; }
.task { width: 156px; height: 24px; justify-content: flex-start; gap: 4px; padding-left: 7px; border: 1px solid #666; outline: 1px solid #000; outline-offset: -2px; background: linear-gradient(#414141 0, #292929 11px, #060606 12px, #111 100%); white-space: nowrap; }
.now { background: #141414; border-color: #444; }
.tray { display: flex; align-items: center; gap: 2px; margin-left: auto; padding-right: 8px; }
.lang { width: 16px; height: 16px; margin-right: 13px; background: #f77f0c; line-height: 16px; text-align: center; }
.back { margin-right: 6px; }
.tray time { margin-left: 5px; }
```
FILE: grid.js
```js
const columns = [["CU", 64], ["CV", 333], ["CW", 95], ["CX", 84], ["CY", 142], ["CZ", 64], ["DA", 64], ["DB", 64], ["DC", 64], ["DD", 64], ["DE", 64], ["DF", 64], ["DG", 64], ["", 0]];
const heights = { 139: 52, 140: 29, 141: 26, 142: 22, 143: 26, 144: 23, 145: 23 };
const data = {
  139: ["Найменування енергоресурсів", "Річна<br>потреба", "Тариф за одиницю", "Річна<br>вартість,тис.грн."],
  140: ["1.потреба в силовій електроенергії", "237674,15", "0,89", "211,5"],
  141: ["2.потреба в енергії для освітлення", "45903,614", "0,89", "40,9"],
  142: ["3.потреба в стиснутому повітрі", "17814,384", "0,52", "9,3"],
  143: ["4.річна потреба в воді для охолодження", "23,09", "2,47", "0,057"],
  144: ["5.потреба в парі на опалення", "1922,4", "75", "144,18"],
  145: ["6.потреба в воді для побутових цілей", "1200", "3,2", "3,84"]
};

let html = '<colgroup><col style="width:29px">';
for (const [, w] of columns) html += w ? `<col style="width:${w}px">` : "<col>";
html += '</colgroup><thead><tr><th class="all"></th>';
for (const [name] of columns) html += `<th class="${name === "CX" ? "sel" : ""}">${name}</th>`;
html += "</tr></thead><tbody>";

for (let n = 138; n <= 162; n++) {
  html += `<tr style="height:${heights[n] || 20}px"><th class="${n === 158 ? "sel" : ""}">${n < 162 ? n : ""}</th>`;
  columns.forEach((column, c) => {
    const cls = [];
    const filled = data[n] && c >= 1 && c <= 4;
    if (data[n] && c <= 4) cls.push("r");
    if (n >= 138 && n <= 145 && c >= 1 && c <= 4) cls.push("b");
    if (filled) cls.push(c === 1 || n === 139 ? "t" : "m");
    if (filled && n === 139) cls.push("h");
    if (n === 139 && c === 3) cls.push("j");
    if (n === 158 && c === 3) cls.push("cur");
    html += `<td class="${cls.join(" ")}">${filled ? data[n][c - 1] : ""}</td>`;
  });
  html += "</tr>";
}
document.getElementById("grid").innerHTML = html + "</tbody>";
```
